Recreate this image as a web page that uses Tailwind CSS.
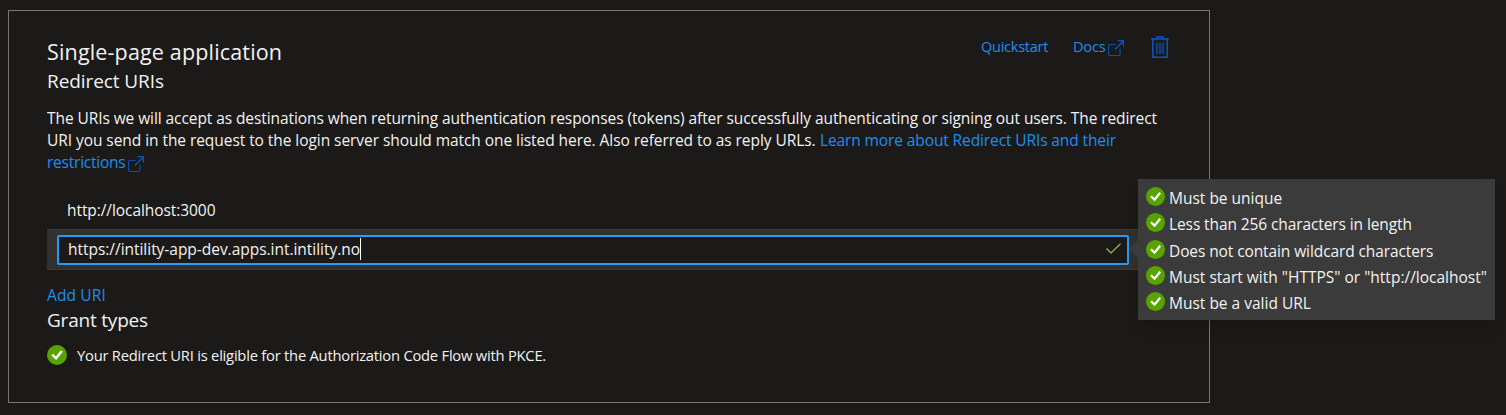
<!DOCTYPE html>
<html lang="en">
<head>
<meta charset="utf-8">
<title>Single-page application</title>
<script src="https://cdn.jsdelivr.net/npm/@tailwindcss/browser@4"></script>
</head>
<body class="w-[1506px] h-[415px] overflow-hidden bg-[#1b1a19] text-[#f3f2f1] font-['Open_Sans',sans-serif] text-[15.5px] leading-[22px] whitespace-nowrap">
<svg class="hidden">
  <symbol id="ok" viewBox="0 0 20 20"><circle cx="10" cy="10" r="10" fill="#57a300"/><path d="M5.200 9.700 9 13.300 14.900 6" fill="none" stroke="#fff" stroke-width="2.400"/></symbol>
  <symbol id="ext" viewBox="0 0 16 16"><path d="M7.500 4.500H2Q.5 4.500 .5 6V14Q.5 15.500 2 15.500H10.500Q12 15.500 12 14V8.500" fill="none" stroke="#0b4fb3" stroke-width="1.100"/><path d="M7 9.500 15 1.200M9.500 .7H15.400V6.500" fill="none" stroke="#0b55c4" stroke-width="1.300"/></symbol>
</svg>
<main class="relative ml-2 mt-[10px] w-[1202px] h-[393px] border border-[#797775] pl-[38px] pr-[40px] pt-[27px]">
  <header class="flex justify-between h-[57px]">
    <div>
      <h1 class="text-[21.5px] leading-[28px] tracking-[0.16px]">Single-page application</h1>
      <h2 class="text-[19px] leading-[28px] mt-px tracking-[-0.08px]">Redirect URIs</h2>
    </div>
    <nav class="flex text-[14.5px] text-[#1e8eee]">
      <a class="mt-[-2px] w-[92px] tracking-[-0.25px]">Quickstart</a>
      <a class="mt-[-2px] w-[35px] tracking-[-0.15px]">Docs</a>
      <svg class="w-4 h-4 mt-[2px]"><use href="#ext"/></svg>
      <svg class="w-[18px] h-[22px] ml-[27px] mt-[-2px]" viewBox="0 0 18 22" fill="none" stroke="#0b55c4"><path d="M0 3H18M6 3V.8H12V3M1.800 3V21.200H16.200V3" stroke-width="1.500"/><path d="M6 6.500V18M9 6.500V18M12 6.500V18" stroke-width="1.300"/></svg>
    </nav>
  </header>
  <div class="mt-[12px]">
    <p class="tracking-[-0.08px]">The URIs we will accept as destinations when returning authentication responses (tokens) after successfully authenticating or signing out users. The redirect</p>
    <p class="flex"><span class="w-[773px] tracking-[-0.06px]">URI you send in the request to the login server should match one listed here. Also referred to as reply URLs.</span><a class="text-[#1e8eee] tracking-[-0.11px]">Learn more about Redirect URIs and their</a></p>
    <p class="flex text-[#1e8eee]"><a class="w-[81px] tracking-[-0.23px]">restrictions</a><svg class="w-4 h-4 mt-[5px]"><use href="#ext"/></svg></p>
  </div>
  <div class="h-[56px] pl-5 pt-[26px] tracking-[-0.07px]">http://localhost:3000</div>
  <div class="h-[41px] w-[1123px] bg-[#323130] border-y border-[#3b3a39] pl-[10px] pt-[5px]">
    <div class="w-[1072px] h-[30px] border-2 border-[#2899f5] rounded-[2px] bg-[#1b1a19] flex items-center pl-[9px] pr-[6px]">
      <span class="mb-[2px] tracking-[-0.03px]">https://intility-app-dev.apps.int.intility.no</span><i class="w-px h-[22px] mb-[2px] bg-white"></i>
      <svg class="w-[15px] h-[11px] ml-auto mb-[4px]" viewBox="0 0 15 11" fill="none" stroke="#92c353" stroke-width="1.200"><path d="M.5 5.500 5 10 14.500 .7"/></svg>
    </div>
  </div>
  <div class="mt-[14px] text-[#1e8eee] tracking-[0.14px]">Add URI</div>
  <h2 class="text-[19px] leading-[28px] tracking-[-0.2px]">Grant types</h2>
  <div class="flex mt-[11px] text-[14.75px] tracking-[-0.235px]"><svg class="w-5 h-5 mr-[10px]"><use href="#ok"/></svg><span class="-mt-px">Your Redirect URI is eligible for the Authorization Code Flow with PKCE.</span></div>
  <aside class="absolute left-[1129px] top-[168px] w-[357px] h-[141px] bg-[#3b3b3b] shadow-lg pl-2 pt-[8px]">
    <svg class="absolute left-[-9px] top-[61px] w-[9px] h-[18px]" viewBox="0 0 9 18" fill="#3b3b3b"><path d="M9 0V18L0 9Z"/></svg>
    <ul>
      <li class="flex h-[26.25px]"><svg class="w-[19px] h-[19px] mr-1"><use href="#ok"/></svg>Must be unique</li>
      <li class="flex h-[26.25px] tracking-[-0.1px]"><svg class="w-[19px] h-[19px] mr-1"><use href="#ok"/></svg>Less than 256 characters in length</li>
      <li class="flex h-[26.25px] tracking-[-0.1px]"><svg class="w-[19px] h-[19px] mr-1"><use href="#ok"/></svg>Does not contain wildcard characters</li>
      <li class="flex h-[26.25px]"><svg class="w-[19px] h-[19px] mr-1"><use href="#ok"/></svg>Must start with "HTTPS" or "http://localhost"</li>
      <li class="flex h-[26.25px]"><svg class="w-[19px] h-[19px] mr-1"><use href="#ok"/></svg>Must be a valid URL</li>
    </ul>
  </aside>
</main>
</body>
</html>
